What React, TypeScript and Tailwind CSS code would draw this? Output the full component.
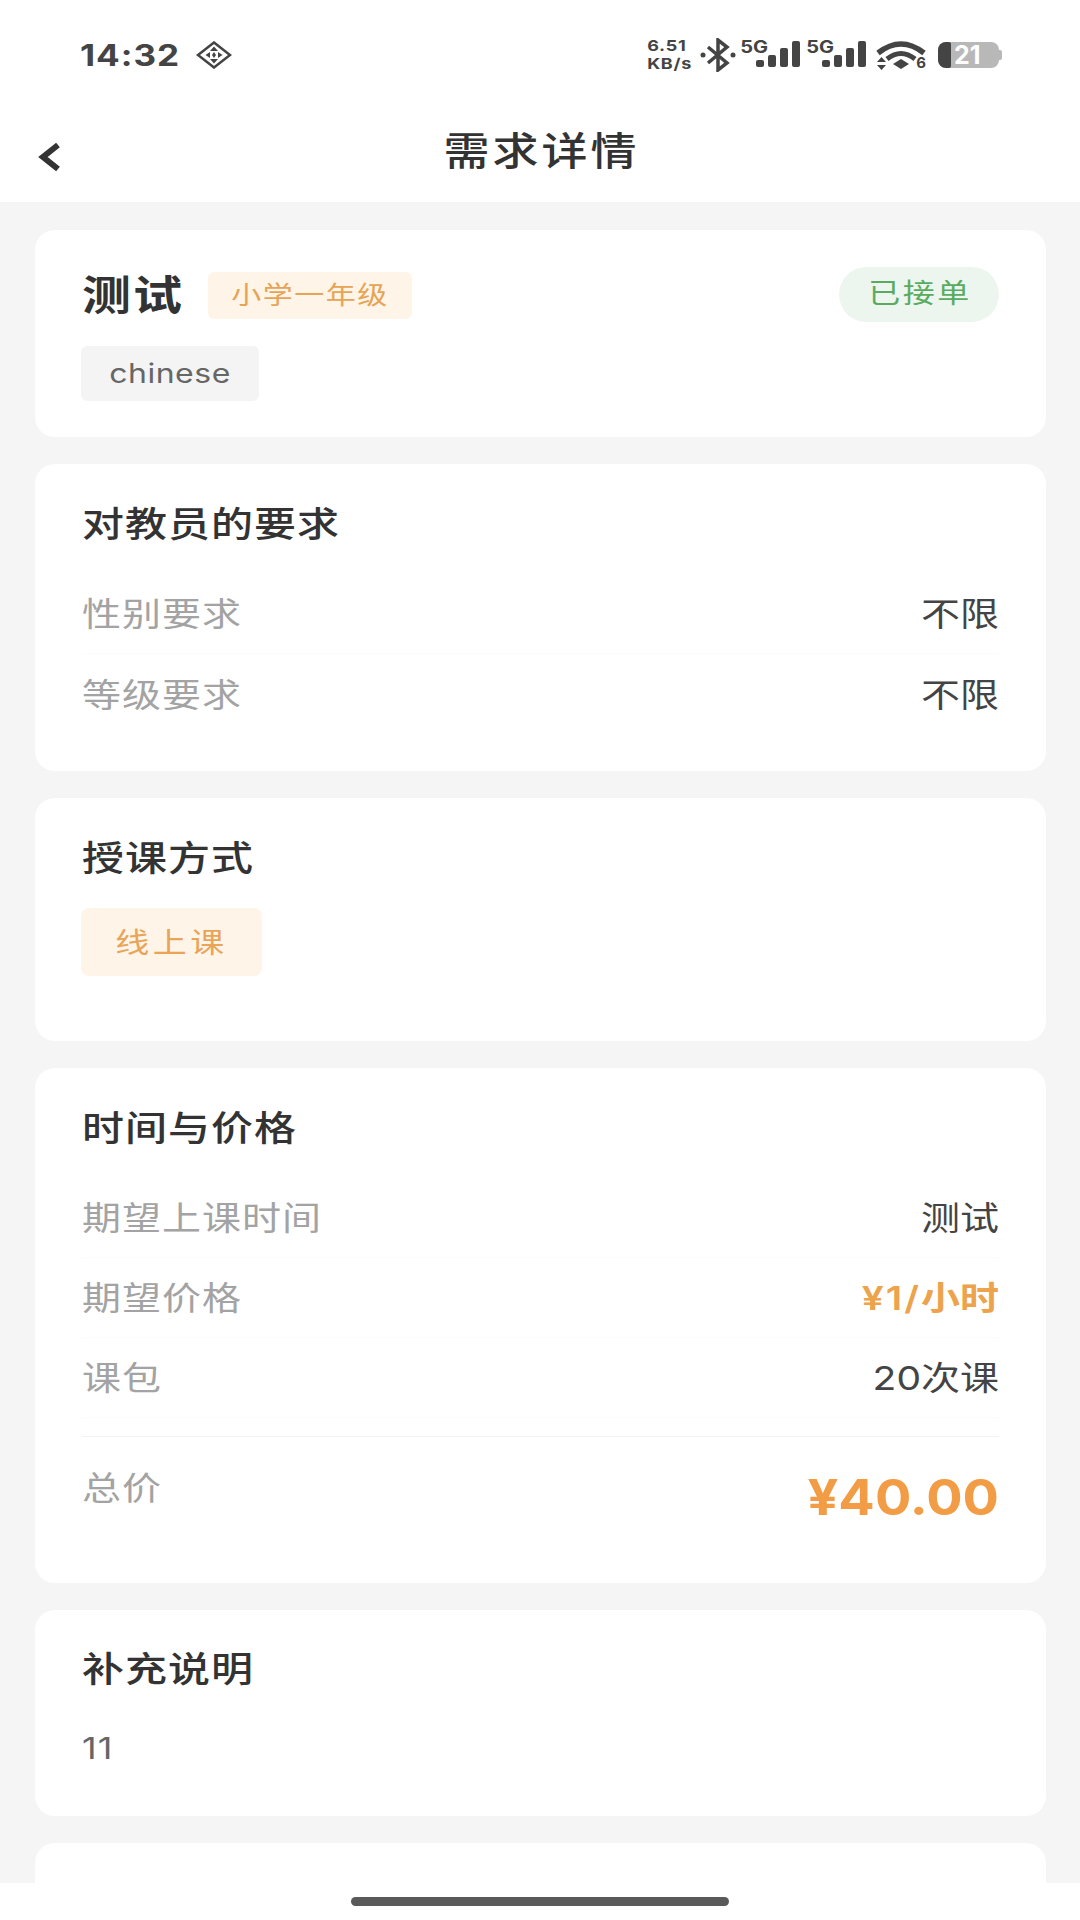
import React from 'react';

const cjk = "font-['Inter','Noto_Sans_CJK_SC',sans-serif]";
const squash = 'inline-block leading-none scale-y-[0.84]';

const Row = ({ label, value, valueClass, divider }: { label: string; value: React.ReactNode; valueClass?: string; divider?: boolean }) => (
  <div className={`flex h-[80px] items-center justify-between ${divider ? 'border-b border-[#fbfbfb]' : ''}`}>
    <span className={`${squash} text-[39px] tracking-[1px] text-[#a3a3a3]`}>{label}</span>
    <span className={`${squash} text-[39px] ${valueClass ?? 'text-[#444444]'}`}>{value}</span>
  </div>
);

const SectionTitle = ({ children }: { children: React.ReactNode }) => (
  <div className="flex h-[56px] items-center">
    <h3 className={`${squash} text-[42px] font-medium tracking-[1px] text-[#333333]`}>{children}</h3>
  </div>
);

const Signal = () => (
  <div className="relative mr-[6px] flex h-[34px] w-[60px] items-end justify-end gap-[4px] pb-[5px]">
    <span className="absolute left-0 top-0 inline-block scale-y-[0.84] text-[20px] font-bold leading-[18px]">5G</span>
    <div className="h-[7px] w-[8px] rounded-[2px] bg-[#444444]" />
    <div className="h-[12px] w-[8px] rounded-[2px] bg-[#444444]" />
    <div className="h-[19px] w-[8px] rounded-[2px] bg-[#444444]" />
    <div className="h-[26px] w-[8px] rounded-[2px] bg-[#444444]" />
  </div>
);

const StatusBar = () => (
  <div className="flex h-[110px] items-center justify-between pl-[80px] pr-[78px] text-[#444444]">
    <div className="flex items-center gap-[16px]">
      <span className="text-[35px] font-bold leading-none tracking-[1px] scale-y-[0.84]">14:32</span>
      <svg width="36" height="28" viewBox="0 0 36 28" fill="none" stroke="#444444" strokeWidth="2.5">
        <path d="M18 1.5 L34 14 L18 26.5 L2 14 Z" />
        <path d="M18 5.5 L22 10 H14 Z M9.5 14 L14 11 V17 Z M26.5 14 L22 11 V17 Z M18 22.5 L22 18 H14 Z M18 11 L20 14 L18 17 L16 14 Z" fill="#444444" stroke="none" />
      </svg>
    </div>
    <div className="flex items-center">
      <div className="mr-[8px] flex scale-y-[0.84] flex-col text-[18px] font-bold leading-[22px] tracking-[0.8px]">
        <span>6.51</span>
        <span>KB/s</span>
      </div>
      <svg width="36" height="34" viewBox="0 0 36 34" fill="none" stroke="#444444" strokeWidth="3.5" className="mr-[4px]">
        <path d="M8 9 L27 25 L18 32 V2 L27 9 L8 25" />
        <circle cx="3" cy="17" r="2.5" fill="#444444" stroke="none" />
        <circle cx="33" cy="17" r="2.5" fill="#444444" stroke="none" />
      </svg>
      <Signal />
      <Signal />
      <svg width="50" height="30" viewBox="0 0 50 30" className="ml-[4px]" fill="none" stroke="#444444">
        <path d="M2 13 Q25 -5 48 13" strokeWidth="5.5" />
        <path d="M11 19 Q25 8 39 19" strokeWidth="5" />
        <path d="M17 24 L25 19 L33 24 L25 29 Z" fill="#444444" stroke="none" />
        <path d="M1 22 L5.5 17 L10 22 Z M1 25 L5.5 30 L10 25 Z" fill="#444444" stroke="none" />
      </svg>
      <span className="-ml-[10px] self-end pb-[8px] text-[15px] font-bold leading-[12px]">6</span>
      <div className="ml-[12px] flex h-[26px] w-[61px] items-center rounded-[8px] bg-[#b8b8b8]">
        <div className="h-full w-[13px] rounded-l-[8px] rounded-r-[2px] bg-[#444444]" />
        <span className="ml-[3px] text-[25px] font-bold leading-none text-white">21</span>
      </div>
      <div className="h-[10px] w-[3px] rounded-r-[2px] bg-[#b8b8b8]" />
    </div>
  </div>
);

export default function App() {
  return (
    <div className={`${cjk} relative h-[1920px] w-[1080px] overflow-hidden bg-[#f5f5f5]`}>
      <header className="h-[202px] bg-white">
        <StatusBar />
        <div className="relative flex h-[82px] items-center justify-center pl-[3px]">
          <svg width="26" height="30" viewBox="0 0 26 30" fill="none" stroke="#333333" strokeWidth="6" className="absolute left-[37px] top-[32px]">
            <path d="M21 3 L6 15 L21 27" />
          </svg>
          <h1 className={`${squash} text-[46px] font-medium tracking-[3px] text-[#333333]`}>需求详情</h1>
        </div>
      </header>

      <main className="flex flex-col gap-[27px] pl-[35px] pr-[34px] pt-[28px]">
        <section className="h-[207px] rounded-[20px] bg-white px-[47px] pt-[37px]">
          <div className="flex h-[56px] items-center">
            <span className={`${squash} text-[49px] font-bold tracking-[2px] text-[#333333]`}>测试</span>
            <span className="ml-[24px] flex h-[47px] w-[204px] items-center justify-center rounded-[6px] bg-[#fef4e8]">
              <span className={`${squash} text-[30px] tracking-[1.5px] text-[#e5a456]`}>小学一年级</span>
            </span>
            <span className="-mt-[2px] ml-auto flex h-[55px] w-[160px] items-center justify-center rounded-full bg-[#edf6ee] pl-[2px]">
              <span className={`${squash} text-[32px] tracking-[2.5px] text-[#5aab5f]`}>已接单</span>
            </span>
          </div>
          <div className="-ml-[1px] mt-[23px] flex h-[55px] w-[178px] items-center justify-center rounded-[6px] bg-[#f4f4f4]">
            <span className={`${squash} text-[32px] tracking-[0.5px] text-[#666666]`}>chinese</span>
          </div>
        </section>

        <section className="h-[307px] rounded-[20px] bg-white px-[47px] pt-[32px]">
          <SectionTitle>对教员的要求</SectionTitle>
          <div className="mt-[22px]">
            <Row label="性别要求" value="不限" divider />
            <Row label="等级要求" value="不限" />
          </div>
        </section>

        <section className="h-[243px] rounded-[20px] bg-white px-[47px] pt-[32px]">
          <SectionTitle>授课方式</SectionTitle>
          <div className="-ml-[1px] mt-[22px] flex h-[68px] w-[181px] items-center justify-center rounded-[8px] bg-[#fef4e8] pt-[1px]">
            <span className={`${squash} text-[34px] tracking-[3.5px] text-[#e9a458]`}>线上课</span>
          </div>
        </section>

        <section className="h-[515px] rounded-[20px] bg-white px-[47px] pt-[32px]">
          <SectionTitle>时间与价格</SectionTitle>
          <div className="mt-[22px]">
            <Row label="期望上课时间" value="测试" divider />
            <Row
              label="期望价格"
              value={<><span className="tracking-[2px]">¥1/</span>小时</>}
              valueClass="font-semibold text-[#eda24c]"
              divider
            />
            <Row label="课包" value="20次课" divider />
          </div>
          <div className="mt-[18px] flex items-start justify-between border-t border-[#f2f2f2] pt-[31px]">
            <span className={`${squash} text-[39px] tracking-[1px] text-[#a3a3a3]`}>总价</span>
            <span className="mt-[3px] inline-block scale-y-[0.92] text-[54px] font-bold leading-none text-[#f29d45]">¥40.00</span>
          </div>
        </section>

        <section className="h-[206px] rounded-[20px] bg-white px-[47px] pt-[31px]">
          <SectionTitle>补充说明</SectionTitle>
          <div className="mt-[33px] h-[36px]">
            <span className={`${squash} text-[36px] tracking-[1px] text-[#666666]`}>11</span>
          </div>
        </section>

        <section className="h-[120px] rounded-[20px] bg-white" />
      </main>

      <div className="absolute inset-x-0 bottom-0 flex h-[37px] items-start justify-center bg-white pt-[14px]">
        <div className="h-[9px] w-[378px] rounded-full bg-[#5a5a5a]" />
      </div>
    </div>
  );
}
